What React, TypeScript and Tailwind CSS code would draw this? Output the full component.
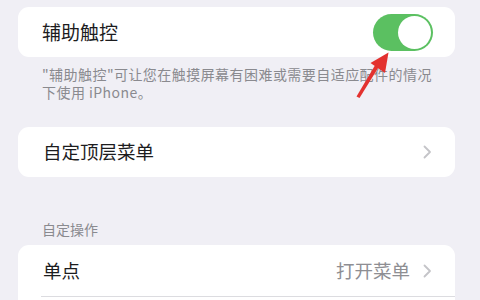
const Chevron = () => (
  <svg width="9" height="14" viewBox="0 0 9 14" fill="none">
    <path d="M1.5 1.5L7 7L1.5 12.5" stroke="#c4c4c8" strokeWidth="1.8" strokeLinecap="round" strokeLinejoin="round" />
  </svg>
);

const Arrow = () => (
  <svg className="absolute left-0 top-0" width="480" height="300" viewBox="0 0 480 300">
    <path d="M356.5 96.5 L359.5 98 L379 66.5 L375.5 64.5 Z" fill="#e3312f" />
    <path d="M388.5 52.5 L370.5 63 L385 73 Z" fill="#e3312f" />
  </svg>
);

const Toggle = () => (
  <div className="flex items-center justify-end w-[60px] h-[37px] rounded-full bg-[#5bc061] p-[2px]">
    <div className="w-[33px] h-[33px] rounded-full bg-white" />
  </div>
);

export default function App() {
  return (
    <div
      className="relative w-[480px] h-[300px] overflow-hidden bg-[#f0eff5] pt-[7px] pl-[18px]"
      style={{ fontFamily: '"Noto Sans CJK SC", "Noto Sans", sans-serif' }}
    >
      <div className="flex items-center justify-between w-[437px] h-[50px] rounded-[11px] bg-white pl-[24px] pr-[22px]">
        <span className="text-[19px] text-[#1c1c1e]">辅助触控</span>
        <Toggle />
      </div>

      <p className="mt-[8px] pl-[24px] text-[14px] leading-[18px] tracking-[0.45px] text-[#8a8a8f]">
        "辅助触控"可让您在触摸屏幕有困难或需要自适应配件的情况
        <br />
        下使用 iPhone。
      </p>

      <div className="mt-[26px] flex items-center justify-between w-[437px] h-[50px] rounded-[11px] bg-white pl-[25px] pr-[23px]">
        <span className="text-[18.5px] text-[#1c1c1e]">自定顶层菜单</span>
        <Chevron />
      </div>

      <p className="mt-[44px] pl-[24px] text-[14px] leading-[17px] text-[#8a8a8f]">自定操作</p>

      <div className="mt-[7px] w-[437px] rounded-[11px] bg-white">
        <div className="flex items-center justify-between h-[51px] pl-[25px] pr-[23px]">
          <span className="text-[18.5px] text-[#1c1c1e]">单点</span>
          <div className="flex items-center gap-[13px]">
            <span className="text-[18.5px] text-[#8e8e93]">打开菜单</span>
            <Chevron />
          </div>
        </div>
        <div className="ml-[23px] h-px bg-[#dcdce0]" />
        <div className="h-[51px]" />
      </div>

      <Arrow />
    </div>
  );
}
